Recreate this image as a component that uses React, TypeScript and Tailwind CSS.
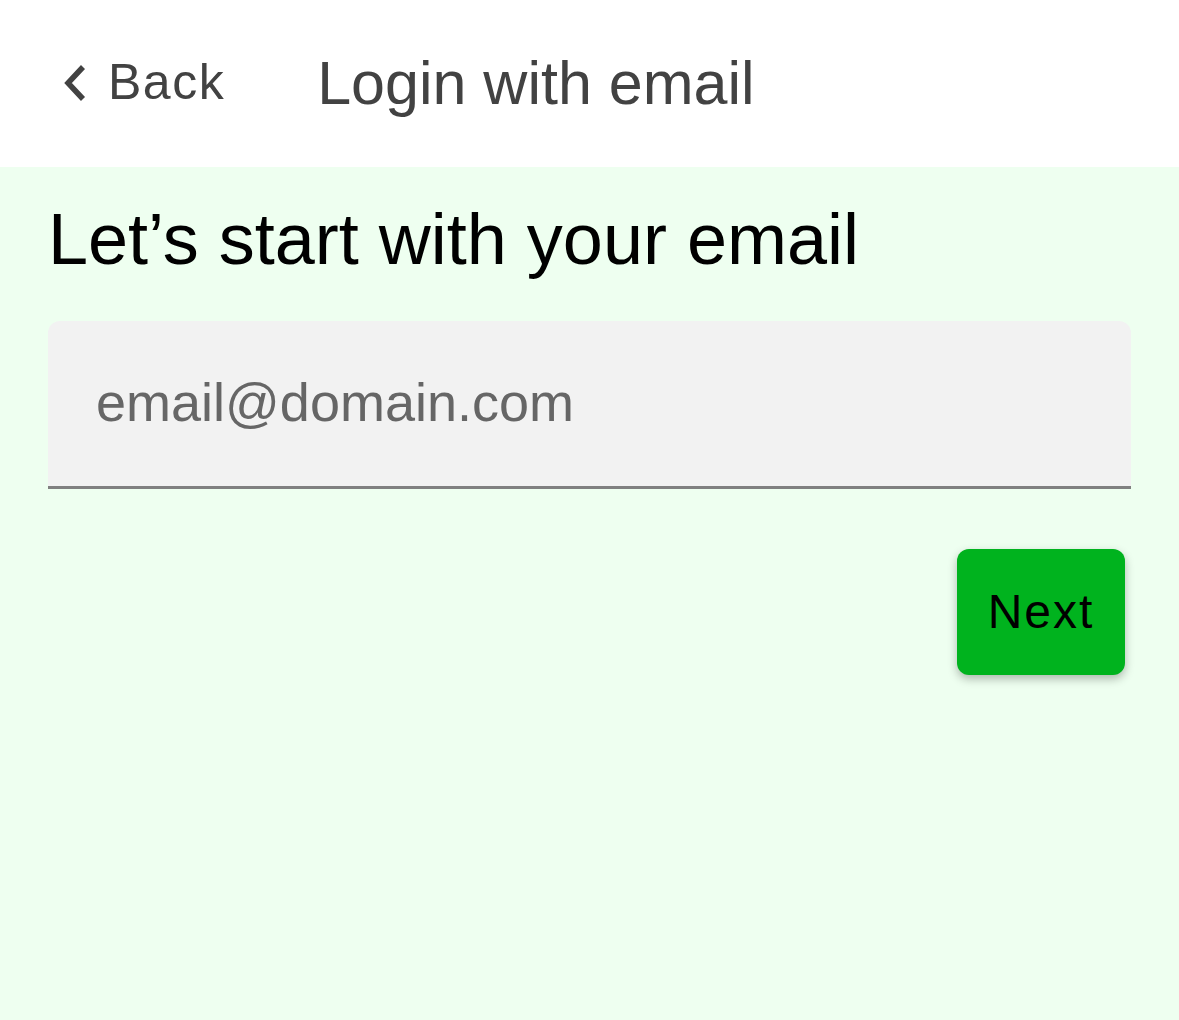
import React from "react";

export default function App() {
  return (
    <div className="w-[1179px] h-[1020px] flex flex-col bg-[#eefff0]" style={{ fontFamily: '"Liberation Sans", Arial, sans-serif' }}>
      <header className="h-[167px] bg-white flex items-center shrink-0">
        <button className="flex items-center ml-[63px] text-[#424242] -mt-[3px]">
          <svg width="24" height="36" viewBox="0 0 24 36" className="mr-[21px] mt-[2px]">
            <path d="M20 2 L5 18 L20 34" fill="none" stroke="#424242" strokeWidth="5.5" strokeLinejoin="miter" />
          </svg>
          <span className="text-[50px] leading-none tracking-[1.5px]">Back</span>
        </button>
        <h1 className="ml-[92px] text-[61px] leading-none text-[#424242]">Login with email</h1>
      </header>
      <main className="flex-1 flex flex-col px-[48px]">
        <h2 className="mt-[36px] text-[72px] leading-[72px] text-black">Let’s start with your email</h2>
        <div className="mt-[46px] h-[168px] bg-[#f2f2f2] rounded-t-[12px] border-b-[3px] border-[#808080] flex items-center pl-[48px]">
          <input
            placeholder="email@domain.com"
            className="w-full bg-transparent outline-none text-[54px] placeholder:text-[#666666] text-[#222] -mt-[3px]"
            style={{ fontFamily: '"Liberation Sans", Arial, sans-serif' }}
          />
        </div>
        <div className="flex justify-end mt-[60px] pr-[6px]">
          <button className="w-[168px] h-[126px] rounded-[12px] bg-[#00b31e] text-black text-[48px] tracking-[2px] shadow-[0_4px_10px_rgba(0,0,0,0.28)] flex items-center justify-center">
            Next
          </button>
        </div>
      </main>
    </div>
  );
}
